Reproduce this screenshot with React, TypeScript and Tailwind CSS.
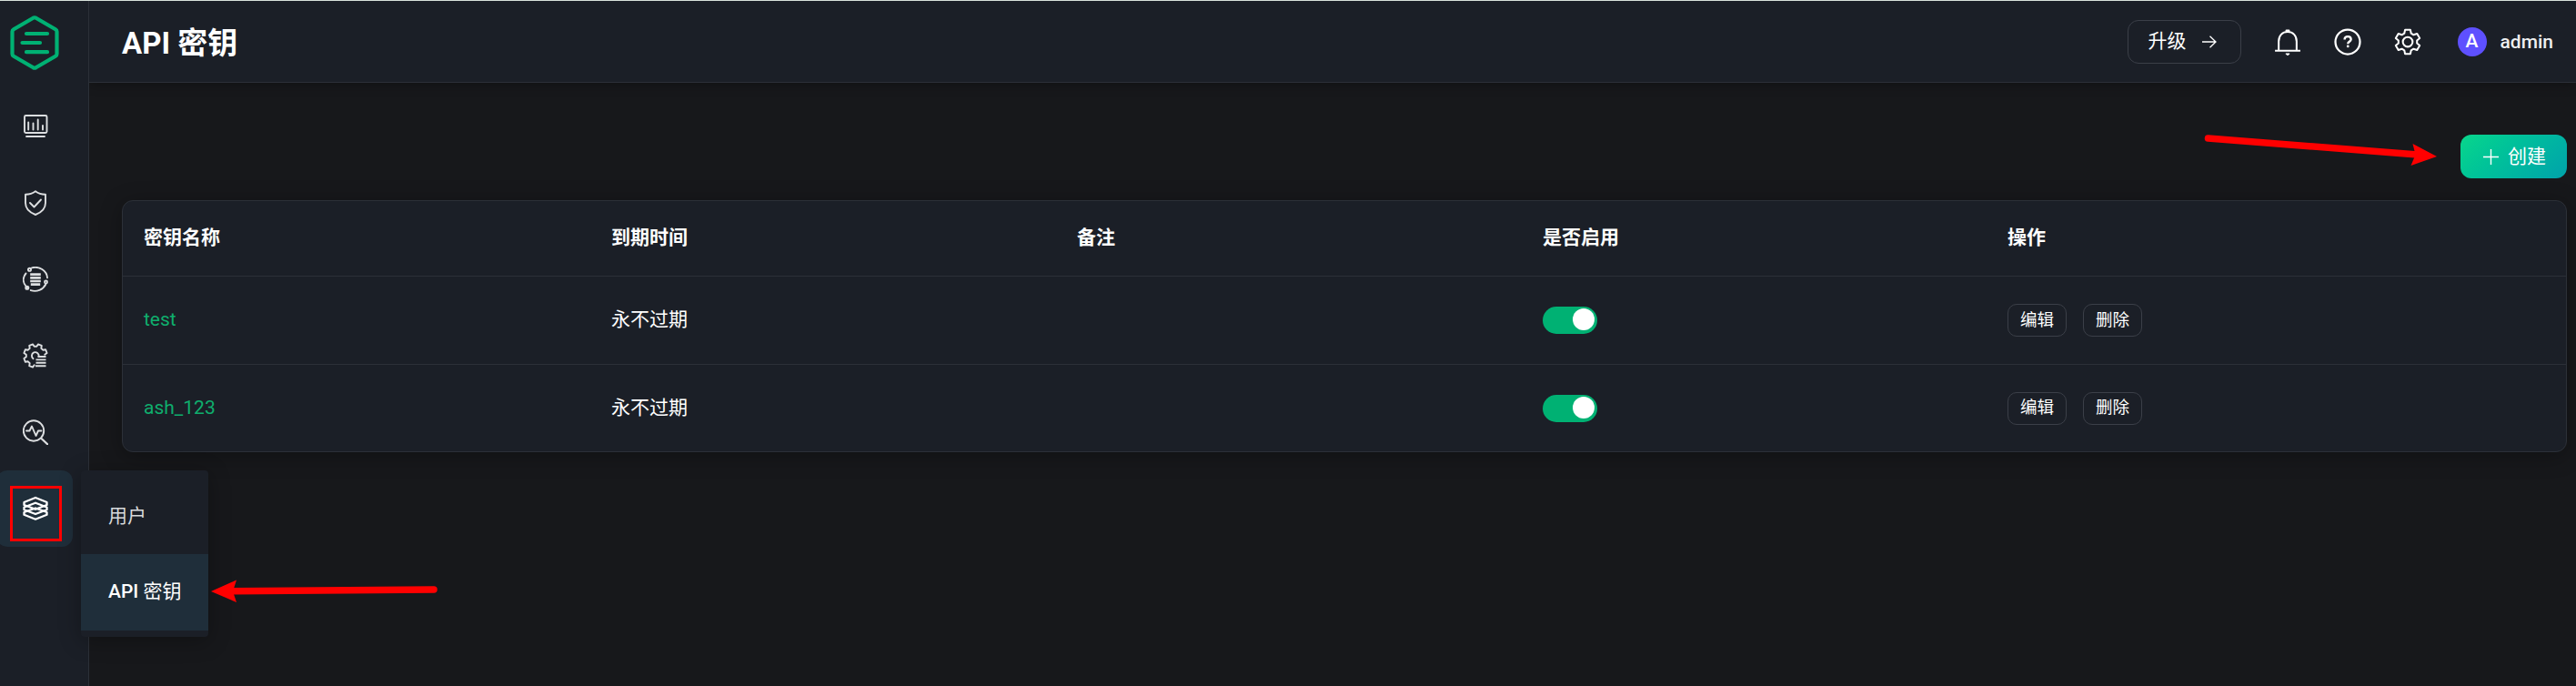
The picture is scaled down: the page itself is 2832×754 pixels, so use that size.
import { useState } from 'react';
import type { ReactNode } from 'react';

type ApiKey = { name: string; expires: string; note: string; enabled: boolean };

const initialKeys: ApiKey[] = [
  { name: 'test', expires: '永不过期', note: '', enabled: true },
  { name: 'ash_123', expires: '永不过期', note: '', enabled: true },
];

const headers = ['密钥名称', '到期时间', '备注', '是否启用', '操作'];

const rowGrid = 'grid grid-cols-[514px_512px_512px_511px_1fr] items-center pl-[23px]';

function Icon({ children, size = 28 }: { children: ReactNode; size?: number }) {
  return (
    <svg
      width={size}
      height={size}
      viewBox="0 0 28 28"
      fill="none"
      stroke="currentColor"
      strokeWidth="1.9"
      strokeLinecap="round"
      strokeLinejoin="round"
      className="shrink-0"
    >
      {children}
    </svg>
  );
}

const MonitorIcon = () => (
  <Icon>
    <rect x="2" y="2" width="24.5" height="19" rx="1.5" />
    <path d="M4 25h20" />
    <path d="M6.2 17.500V9.500M11.500 17.500v-7M16.700 17.500v-11M22 17.500v-4.500" />
  </Icon>
);

const ShieldIcon = () => (
  <Icon>
    <path d="M14 1.300C11 3.700 7 4.800 3 4.800V14c0 6.500 4.500 10.500 11 13 6.500-2.500 11-6.500 11-13V4.800c-4 0-8-1.100-11-3.500z" />
    <path d="M8 14l4.500 4.500 7.500-8" />
  </Icon>
);

const DataIcon = () => (
  <Icon>
    <path d="M10 1.300c8-2 16.500 3 17 11M25.300 19.500c-3 6-10 8.700-16.500 6.600M3.500 21.500C-.2 17 0 11.500 3.500 7.500" />
    <circle cx="7.500" cy="3.300" r="1.600" />
    <circle cx="25.500" cy="17" r="1.500" />
    <circle cx="4.800" cy="23.300" r="1.600" fill="currentColor" />
    <path d="M8.200 8.700h11.600M8.200 12.400h11.600M8.200 16h11.600M8.800 19.700h10.400" strokeWidth="2.700" strokeLinecap="butt" />
  </Icon>
);

// teeth of the open gear, the lower right corner is left free for the list
const gearTeeth = [112.5, 157.5, 202.5, 247.5, 292.5, 337.5]
  .flatMap((a) => [
    [a - 15, 10.3],
    [a - 9, 13],
    [a + 9, 13],
    [a + 15, 10.3],
  ])
  .map(([a, r]) => {
    const rad = (a * Math.PI) / 180;
    return `${(14 + r * Math.cos(rad)).toFixed(1)},${(14 + r * Math.sin(rad)).toFixed(1)}`;
  })
  .join(' ');

const SettingsListIcon = () => (
  <Icon>
    <polyline points={gearTeeth} />
    <path d="M11.500 17.200a3.900 3.900 0 1 1 6.200-2.700" />
    <path d="M16.500 15h9M14.500 18.400h11M14.500 21.800h11M14 25.200h11.500" strokeLinecap="butt" />
  </Icon>
);

const MonitorSearchIcon = () => (
  <Icon>
    <circle cx="12" cy="12.500" r="11.200" />
    <path d="M20.500 21l7 6.500" strokeWidth="2.300" />
    <path d="M4 12.500h3.500l2.500-5 4.500 10.500 2.500-5.500h3.500" />
  </Icon>
);

const LayersIcon = () => (
  <Icon>
    <g strokeWidth="2.300">
      <path d="M14 2L26.500 7v3L14 14.800 1.500 10V7z" />
      <path d="M14 7.700L26.500 12.500v2.700L14 20 1.500 15.200v-2.700z" />
      <path d="M14 13.500L26.500 18v2.700L14 25.700 1.500 20.700V18z" />
    </g>
  </Icon>
);

const BellIcon = () => (
  <Icon size={30}>
    <path d="M1 23h26M4.800 23V13.500c0-6 3.700-9.700 9.200-9.700s9.200 3.700 9.200 9.700V23" strokeLinecap="butt" />
    <path d="M12.800 2.600h2.400" strokeWidth="2.200" />
    <path d="M12.300 26.200h3.400l-1.700 1.300z" fill="currentColor" strokeWidth="1" />
  </Icon>
);

const HelpIcon = () => (
  <Icon size={30}>
    <circle cx="14" cy="14" r="12.600" strokeWidth="2.100" />
    <path d="M10.800 11.700c0-2.100 1.400-3.200 3.300-3.200s3.300 1.200 3.300 2.900c0 2.300-3.200 2.500-3.200 4.600" strokeWidth="2.200" strokeLinecap="butt" />
    <circle cx="14.200" cy="18.600" r="1.300" fill="currentColor" stroke="none" />
  </Icon>
);

const GearIcon = () => (
  <Icon size={30}>
    <path d="M11.300 1.700h5.400l.8 3.600 2.500 1.500 3.600-1.200 2.700 4.600-2.800 2.400v2.800l2.800 2.400-2.700 4.600-3.600-1.200-2.500 1.500-.8 3.600h-5.400l-.8-3.600-2.500-1.500-3.600 1.200-2.700-4.600 2.800-2.400v-2.800L1.700 10.200l2.700-4.600L8 6.800l2.500-1.500z" />
    <circle cx="14" cy="14" r="5" />
  </Icon>
);

const navItems = [
  { id: 'dashboard', icon: <MonitorIcon /> },
  { id: 'security', icon: <ShieldIcon /> },
  { id: 'data', icon: <DataIcon /> },
  { id: 'config', icon: <SettingsListIcon /> },
  { id: 'diagnose', icon: <MonitorSearchIcon /> },
  { id: 'system', icon: <LayersIcon /> },
];

function Sidebar() {
  return (
    <aside className="relative w-[98px] shrink-0 border-r border-[#2c3038] bg-[#1b1f27]">
      <svg width="54" height="60" viewBox="0 0 54 60" fill="none" stroke="#00b173" strokeWidth="4.200" strokeLinecap="round" strokeLinejoin="round" className="mt-4 ml-[11px]">
        <path d="M25.500 2.700q1.500-.8 3 0l21.500 12.500q1.500.9 1.500 2.600v24.400q0 1.700-1.500 2.600L28.500 57.300q-1.500.8-3 0L4 44.800q-1.500-.9-1.500-2.600V17.800q0-1.700 1.500-2.600z" />
        <path d="M18 20h23M13.500 30H33M18 40.200h23" />
      </svg>
      <nav className="mt-5">
        {navItems.map((item) => (
          <button
            key={item.id}
            className={`-ml-1 flex h-[84px] w-[84px] items-center justify-center rounded-xl pl-[2px] ${item.id === 'system' ? 'bg-[#1f2e3a] text-white' : 'text-[#dcdee0]'}`}
          >
            {item.icon}
          </button>
        ))}
      </nav>
      {/* submenu of the last nav entry */}
      <div className="absolute top-[516px] left-[89px] z-10 h-[183px] w-[140px] rounded bg-[#1b1f27] pt-2 text-[21px] shadow-[0_4px_24px_rgba(0,0,0,0.3)]">
        <div className="flex h-[84px] items-center pt-[2px] pl-[30px] text-[#d7d9db]">用户</div>
        <div className="flex h-[84px] items-center bg-[#1f2e3a] pl-[30px] font-medium text-white">
          <span>API <span className="font-normal">密钥</span></span>
        </div>
      </div>
      <div className="absolute top-[533px] left-[11px] h-[61px] w-[57px] border-3 border-[#ff0000]" />
    </aside>
  );
}

function Header() {
  return (
    <header className="flex h-[90px] shrink-0 items-center border-b border-[#2c3038] bg-[#1b1f27] pr-[25px] pl-9 shadow-[0_2px_12px_rgba(0,0,0,0.3)]">
      <h1 className="pt-1 text-[33px] font-bold text-white">API 密钥</h1>
      <button className="ml-auto flex h-12 w-[125px] items-center rounded-xl border border-[#3b3f48] pl-[22px] text-[21px] text-white">
        升级
        <svg width="16" height="14" viewBox="0 0 16 14" fill="none" stroke="currentColor" strokeWidth="1.300" className="ml-[17px]">
          <path d="M0 7h15M8.500 .7L15 7l-6.500 6.300" />
        </svg>
      </button>
      <div className="ml-9 flex items-center gap-9 text-white">
        <BellIcon />
        <HelpIcon />
        <GearIcon />
      </div>
      <div className="ml-10 flex size-8 items-center justify-center rounded-full bg-[#5e50ff] text-[21px] font-medium text-white">A</div>
      <span className="ml-[15px] pt-[2px] text-[21px] font-medium text-[#eeeff0]">admin</span>
    </header>
  );
}

function Toggle({ on, onChange }: { on: boolean; onChange: () => void }) {
  return (
    <button
      role="switch"
      aria-checked={on}
      onClick={onChange}
      className={`flex h-[30px] w-[60px] rounded-full px-[3px] pt-[2px] ${on ? 'justify-end bg-[#00b173]' : 'justify-start bg-[#3b3f48]'}`}
    >
      <span className="size-6 rounded-full bg-white" />
    </button>
  );
}

function RowButton({ label }: { label: string }) {
  return (
    <button className="h-9 w-[65px] rounded-[10px] border border-[#3b3f48] text-[18.5px] leading-none text-white">{label}</button>
  );
}

function Annotations() {
  return (
    <svg width="2832" height="754" className="pointer-events-none absolute -top-px left-0 z-20" fill="#ff0000" stroke="#ff0000">
      <path d="M2427.500 152L2658 170" strokeWidth="7.500" strokeLinecap="round" />
      <path d="M2679 172L2652.500 158l3 12-5 12z" stroke="none" />
      <path d="M477 648L256 649.700" strokeWidth="7.500" strokeLinecap="round" />
      <path d="M232 650l28-12.500-4 12.500 4 12z" stroke="none" />
    </svg>
  );
}

export default function App() {
  const [keys, setKeys] = useState(initialKeys);

  const toggleKey = (name: string) => {
    setKeys((prev) => prev.map((k) => (k.name === name ? { ...k, enabled: !k.enabled } : k)));
  };

  return (
    <div className="relative flex h-[754px] w-[2832px] overflow-hidden border-t border-[#d9e3dc] bg-[#17181b] font-[Roboto,'Noto_Sans_CJK_SC',sans-serif]">
      <Sidebar />
      <div className="flex flex-1 flex-col">
        <Header />
        <main className="flex flex-col pt-[57px] pr-[10px] pl-9">
          <button className="flex h-12 w-[117px] items-center self-end rounded-xl bg-linear-135 from-[#0ad68b] to-[#02a2aa] pl-[25px] text-[21px] text-white">
            <svg width="17" height="17" viewBox="0 0 17 17" fill="none" stroke="currentColor" strokeWidth="1.400">
              <path d="M8.500 0v17M0 8.500h17" />
            </svg>
            <span className="ml-[10px] pt-[2px]">创建</span>
          </button>

          <div className="mt-6 rounded-xl border border-[#2c3038] bg-[#1b1f27] text-[21px] text-white shadow-[0_4px_24px_rgba(0,0,0,0.3)]">
            <div className={`${rowGrid} h-[83px] border-b border-[#2c3038] font-bold`}>
              {headers.map((h) => (
                <div key={h}>{h}</div>
              ))}
            </div>
            {keys.map((k) => (
              <div key={k.name} className={`${rowGrid} h-[97px] border-b border-[#2c3038] last:h-[95px] last:border-b-0`}>
                <div className="text-[#0fae6d]">{k.name}</div>
                <div>{k.expires}</div>
                <div>{k.note}</div>
                <Toggle on={k.enabled} onChange={() => toggleKey(k.name)} />
                <div className="flex gap-[18px]">
                  <RowButton label="编辑" />
                  <RowButton label="删除" />
                </div>
              </div>
            ))}
          </div>
        </main>
      </div>
      <Annotations />
    </div>
  );
}
